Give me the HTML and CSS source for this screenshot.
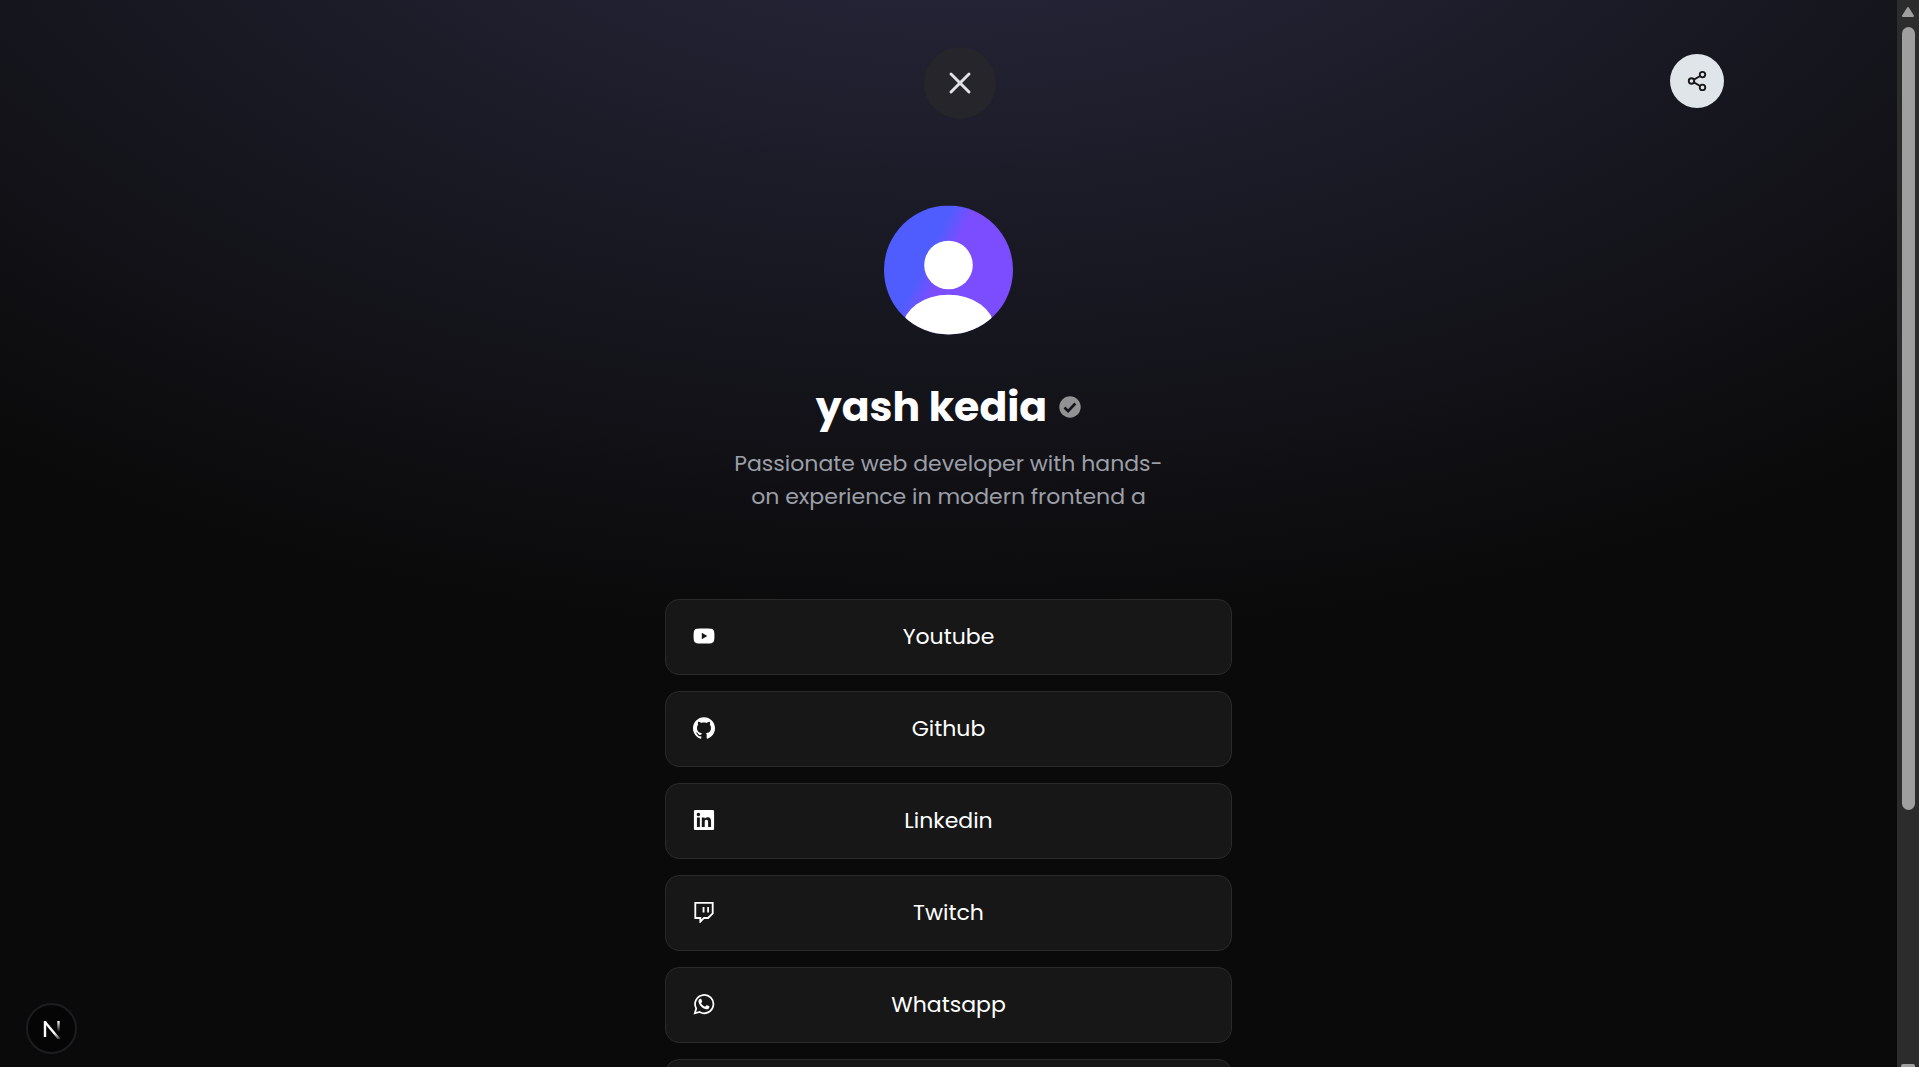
FILE: index.html
```html
<!DOCTYPE html>
<html lang="en">
<head>
    <meta charset="UTF-8">
    <meta name="viewport" content="width=device-width, initial-scale=1.0">
    <title>yash kedia</title>
    <link rel="stylesheet" href="styles.css">
</head>
<body>
    <main class="page">
        <header class="top-bar">
            <button class="share-btn" type="button" aria-label="Share">
                <svg viewBox="0 0 24 24" width="22" height="22" fill="none" stroke="currentColor" stroke-width="2" stroke-linecap="round" stroke-linejoin="round">
                    <circle cx="18" cy="5" r="3"/>
                    <circle cx="6" cy="12" r="3"/>
                    <circle cx="18" cy="19" r="3"/>
                    <path d="M8.59 13.51l6.83 3.98M15.41 6.51l-6.82 3.98"/>
                </svg>
            </button>
        </header>

        <section class="profile">
            <svg class="avatar" viewBox="0 0 130 130" role="img" aria-label="Profile picture">
                <defs>
                    <linearGradient id="avatarBg" gradientUnits="userSpaceOnUse" x1="47" y1="46" x2="65" y2="55">
                        <stop offset="0" stop-color="#4f5dff"/>
                        <stop offset="1" stop-color="#7c4dff"/>
                    </linearGradient>
                    <clipPath id="avatarClip"><circle cx="65" cy="65" r="65"/></clipPath>
                </defs>
                <g clip-path="url(#avatarClip)">
                    <rect width="130" height="130" fill="url(#avatarBg)"/>
                    <circle cx="65" cy="60" r="24.5" fill="#fff"/>
                    <ellipse cx="65" cy="123" rx="46" ry="33" fill="#fff"/>
                </g>
            </svg>
            <div class="name-row">
                <h1>yash kedia</h1>
                <svg class="badge" viewBox="0 0 22 22" role="img" aria-label="Verified">
                    <circle cx="11" cy="11" r="10.7" fill="#929294"/>
                    <path d="M5.5 11.5l3.6 3.6 7.2-7.6" fill="none" stroke="#131319" stroke-width="2.6"/>
                </svg>
            </div>
            <p class="bio">Passionate web developer with hands-<br>on experience in modern frontend a</p>
        </section>

        <nav class="links">
            <a class="link" href="#">
                <svg viewBox="0 0 24 24"><path fill="currentColor" fill-rule="evenodd" d="M12 3.8c3.2 0 6.5.1 8 .4 1.6.4 2.7 1.3 3 2.9.3 1.4.4 3.2.4 4.900s-.1 3.500-.4 4.900c-.3 1.600-1.400 2.500-3 2.900-1.500.3-4.800.4-8 .4s-6.500-.1-8-.4c-1.600-.4-2.700-1.300-3-2.900C.7 15.500.6 13.700.6 12S.7 8.500 1 7.100c.3-1.600 1.400-2.500 3-2.900 1.500-.3 4.800-.4 8-.4zM9.600 8.500v7l6-3.500z"/></svg>
                <span>Youtube</span>
            </a>
            <a class="link" href="#">
                <svg viewBox="0 0 24 24"><path fill="currentColor" d="M12 .297c-6.630 0-12 5.373-12 12 0 5.303 3.438 9.800 8.205 11.385.600.113.820-.258.820-.577 0-.285-.010-1.040-.015-2.040-3.338.724-4.042-1.610-4.042-1.610C4.422 18.070 3.633 17.700 3.633 17.700c-1.087-.744.084-.729.084-.729 1.205.084 1.838 1.236 1.838 1.236 1.070 1.835 2.809 1.305 3.495.998.108-.776.417-1.305.760-1.605-2.665-.300-5.466-1.332-5.466-5.930 0-1.310.465-2.380 1.235-3.220-.135-.303-.540-1.523.105-3.176 0 0 1.005-.322 3.300 1.230.960-.267 1.980-.399 3-.405 1.020.006 2.040.138 3 .405 2.280-1.552 3.285-1.230 3.285-1.230.645 1.653.240 2.873.120 3.176.765.840 1.230 1.910 1.230 3.220 0 4.610-2.805 5.625-5.475 5.920.420.360.810 1.096.810 2.220 0 1.606-.015 2.896-.015 3.286 0 .315.210.690.825.570C20.565 22.092 24 17.592 24 12.297c0-6.627-5.373-12-12-12"/></svg>
                <span>Github</span>
            </a>
            <a class="link" href="#">
                <svg viewBox="0 0 24 24"><path fill="currentColor" fill-rule="evenodd" d="M2.500 1h19c.800 0 1.500.700 1.500 1.500v19c0 .800-.700 1.500-1.500 1.500h-19C1.700 23 1 22.300 1 21.500v-19C1 1.700 1.700 1 2.500 1zM4.300 9.300h3.200v10.400H4.300zM5.900 4.100a1.900 1.900 0 1 0 0 3.800 1.900 1.900 0 0 0 0-3.800zM9.600 9.300h3.100v1.400c.5-.9 1.600-1.700 3.100-1.700 3.200 0 3.900 2.100 3.900 4.900v5.800h-3.200v-5.100c0-1.300 0-2.900-1.800-2.900s-1.900 1.300-1.900 2.800v5.200H9.600z"/></svg>
                <span>Linkedin</span>
            </a>
            <a class="link" href="#">
                <svg viewBox="0 0 24 24" fill="none" stroke="currentColor" stroke-width="2"><path d="M2.500 2h19v11.500l-5 5h-4.500l-4 4v-4H2.500z"/><path d="M11.500 6.500v6M16.500 6.500v6"/></svg>
                <span>Twitch</span>
            </a>
            <a class="link" href="#">
                <svg viewBox="0 0 24 24"><path d="M2 22.200l1.500-5.300a10 10 0 1 1 3.700 3.800z" fill="none" stroke="currentColor" stroke-width="1.900"/><path fill="currentColor" d="M8.200 6.400c.4 0 .7 0 .9.500l.9 2.100c.1.300 0 .6-.2.800l-.8 1c-.2.200-.2.400 0 .7.900 1.500 2.100 2.600 3.800 3.300.3.100.5.100.7-.1l1-1.200c.2-.3.500-.3.800-.2l2.200 1c.4.200.5.400.4.900-.2 1.600-1.600 2.600-3.100 2.500-1.600-.1-4.200-1-6.600-3.600C6.600 12.200 6 10.400 6 9.100c0-1.200.9-2.700 2.200-2.700z"/></svg>
                <span>Whatsapp</span>
            </a>
            <a class="link" href="#" aria-label="More"></a>
        </nav>
    </main>

    <button class="menu-btn" type="button" aria-label="Close menu">
        <svg viewBox="0 0 24 24" width="24" height="24" fill="none" stroke="currentColor" stroke-width="3" stroke-linecap="round"><path d="M3 3l18 18M21 3L3 21"/></svg>
    </button>

    <button class="dev-btn" type="button" aria-label="Open dev tools">
        <svg viewBox="0 0 20 20" width="20" height="20" fill="none" stroke-width="2.400">
            <defs>
                <linearGradient id="diagonal" gradientUnits="userSpaceOnUse" x1="10" y1="10" x2="19" y2="22">
                    <stop offset="0.300" stop-color="#fff"/>
                    <stop offset="1" stop-color="#fff" stop-opacity="0"/>
                </linearGradient>
                <linearGradient id="stem" gradientUnits="userSpaceOnUse" x1="16" y1="2" x2="16" y2="13">
                    <stop offset="0" stop-color="#fff"/>
                    <stop offset="1" stop-color="#fff" stop-opacity="0"/>
                </linearGradient>
            </defs>
            <path d="M3 3L18 21" stroke="url(#diagonal)"/>
            <path d="M3 18V2" stroke="#fff"/>
            <path d="M16.500 2V13" stroke="url(#stem)"/>
        </svg>
    </button>

    <div class="scrollbar" aria-hidden="true">
        <svg viewBox="0 0 16 12" width="16" height="12"><path d="M8 2l5 8H3z" fill="#9f9fa0" stroke="#9f9fa0" stroke-width="2" stroke-linejoin="round"/></svg>
        <div class="track"><div class="thumb"></div></div>
        <div class="scroll-end"></div>
    </div>
</body>
</html>
```
FILE: styles.css
```css
* {
    box-sizing: border-box;
}
body {
    font-family: 'Poppins', 'Inter', sans-serif;
    background-color: #0a0a0a;
    color: #ffffff;
    margin: 0;
    display: flex;
    height: 100vh;
    overflow: hidden;
}
button {
    border: none;
    border-radius: 50%;
    padding: 0;
    cursor: pointer;
    display: flex;
    justify-content: center;
    align-items: center;
}
.page {
    flex: 1;
    overflow-y: auto;
    scrollbar-width: none;
    padding: 54px 24px;
    background: radial-gradient(ellipse 80% 80% at 50% -20%, rgba(120, 119, 198, 0.3), transparent);
}
.top-bar {
    max-width: 1550px;
    margin: 0 auto;
    display: flex;
    justify-content: flex-end;
}
.share-btn {
    width: 54px;
    height: 54px;
    background-color: #e0e5e9;
    color: #18181b;
}
.menu-btn {
    position: fixed;
    top: 47px;
    left: 50%;
    transform: translateX(-50%);
    width: 72px;
    height: 72px;
    background-color: #25252b;
    color: #dfe2e6;
}
.profile {
    display: flex;
    flex-direction: column;
    align-items: center;
    margin-top: 97px;
}
.avatar {
    width: 129px;
    height: 130px;
}
.name-row {
    display: flex;
    align-items: center;
    gap: 12px;
    margin-top: 48px;
}
h1 {
    margin: 0;
    font-size: 41px;
    line-height: 48px;
    font-weight: 700;
}
.badge {
    width: 22px;
    height: 22px;
}
.bio {
    margin: 16px 0 0;
    color: #9c9fa8;
    font-size: 22px;
    line-height: 33px;
    text-align: center;
}
.links {
    display: flex;
    flex-direction: column;
    gap: 16px;
    max-width: 567px;
    margin: 86px auto 0;
}
.link {
    display: grid;
    grid-template-columns: 22px 1fr 22px;
    align-items: center;
    min-height: 76px;
    padding: 0 27px 2px;
    border: 1px solid #2a2a2c;
    border-radius: 14px;
    background-color: #171717;
    color: #ffffff;
    font-size: 22px;
    text-align: center;
    text-decoration: none;
}
.link svg {
    width: 22px;
    height: 22px;
}
.link:hover {
    background-color: #202020;
}
.dev-btn {
    position: fixed;
    left: 26px;
    bottom: 13px;
    width: 51px;
    height: 51px;
    background-color: #050505;
    border: 2px solid #1d1d21;
}
.scrollbar {
    width: 22px;
    background-color: #2c2c2c;
    display: flex;
    flex-direction: column;
    align-items: center;
    padding-top: 6px;
}
.track {
    flex: 1;
    padding-top: 9px;
}
.thumb {
    width: 13px;
    height: 75.5%;
    border-radius: 7px;
    background-color: #9f9fa0;
}
.scroll-end {
    width: 14px;
    height: 3px;
    border-radius: 2px 2px 0 0;
    background-color: #9f9fa0;
}
```
